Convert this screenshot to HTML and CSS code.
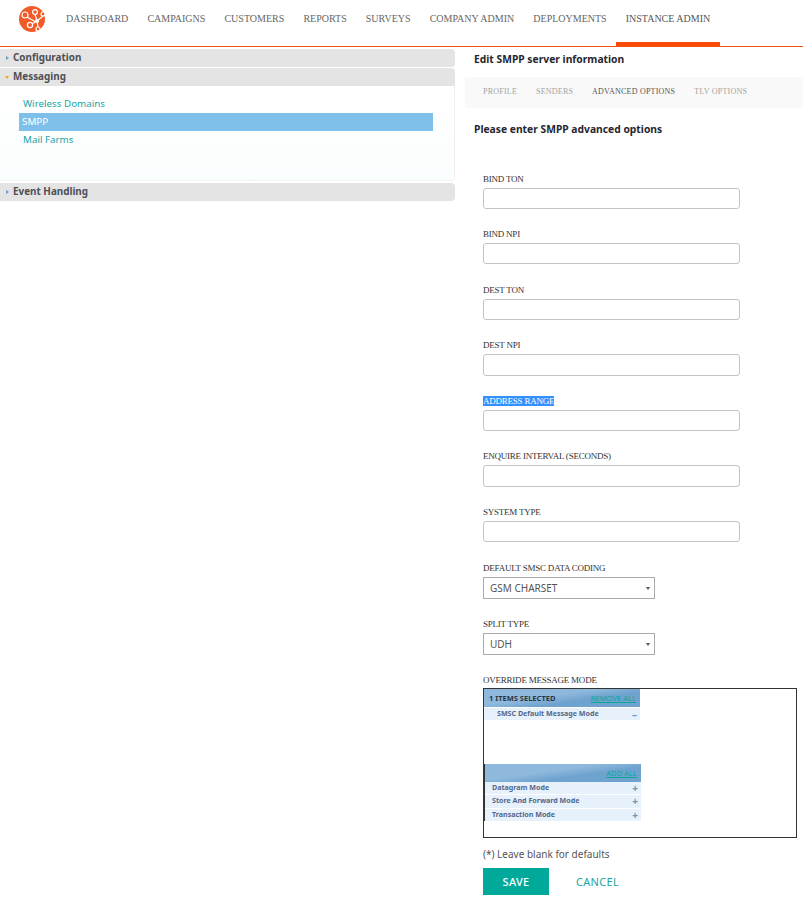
FILE: index.html
```html
<!DOCTYPE html>
<html lang="en">
<head>
<meta charset="utf-8">
<title>Edit SMPP server information</title>
<link rel="stylesheet" href="styles.css">
</head>
<body>
<header class="topbar">
  <svg class="logo" width="27" height="27" viewBox="0 0 27 27" aria-hidden="true">
    <circle cx="13" cy="13" r="13" fill="#f15a29"/>
    <g fill="none" stroke="#fff" stroke-width="1.2">
      <path d="M8 11 L16 15.5 M16 8 L18 15 M24 10 L18 15 M13 18 L18 15 M18 15 L19 21"/>
      <circle cx="6" cy="9" r="3" fill="#f15a29"/>
      <circle cx="16" cy="6" r="2.4" fill="#f15a29"/>
      <circle cx="24" cy="8" r="2" fill="#f15a29"/>
      <circle cx="11" cy="19" r="2.6" fill="#f15a29"/>
      <circle cx="19" cy="23" r="2" fill="#f15a29"/>
    </g>
    <circle cx="18" cy="15" r="2" fill="#fff"/>
  </svg>
  <nav class="nav">
    <a class="nav-item">DASHBOARD</a>
    <a class="nav-item">CAMPAIGNS</a>
    <a class="nav-item">CUSTOMERS</a>
    <a class="nav-item">REPORTS</a>
    <a class="nav-item">SURVEYS</a>
    <a class="nav-item">COMPANY ADMIN</a>
    <a class="nav-item">DEPLOYMENTS</a>
    <a class="nav-item active">INSTANCE ADMIN</a>
  </nav>
</header>
<div class="page">
  <aside class="sidebar">
    <div class="acc-head"><span class="tri right"></span>Configuration</div>
    <div class="acc-head"><span class="tri down"></span>Messaging</div>
    <div class="acc-body">
      <a class="acc-link">Wireless Domains</a>
      <a class="acc-link selected">SMPP</a>
      <a class="acc-link">Mail Farms</a>
    </div>
    <div class="acc-head"><span class="tri right"></span>Event Handling</div>
  </aside>
  <main class="content">
    <h1 class="title">Edit SMPP server information</h1>
    <div class="tabs">
      <span class="tab">PROFILE</span>
      <span class="tab">SENDERS</span>
      <span class="tab current">ADVANCED OPTIONS</span>
      <span class="tab">TLV OPTIONS</span>
    </div>
    <h2 class="subtitle">Please enter SMPP advanced options</h2>
    <form class="form">
      <div class="field"><label class="label">BIND TON</label><input class="input" type="text"></div>
      <div class="field"><label class="label">BIND NPI</label><input class="input" type="text"></div>
      <div class="field"><label class="label">DEST TON</label><input class="input" type="text"></div>
      <div class="field"><label class="label">DEST NPI</label><input class="input" type="text"></div>
      <div class="field"><label class="label"><span class="hl">ADDRESS RANGE</span></label><input class="input" type="text"></div>
      <div class="field"><label class="label">ENQUIRE INTERVAL (SECONDS)</label><input class="input" type="text"></div>
      <div class="field"><label class="label">SYSTEM TYPE</label><input class="input" type="text"></div>
      <div class="field sel-field"><label class="label">DEFAULT SMSC DATA CODING</label><div class="select">GSM CHARSET<span class="caret"></span></div></div>
      <div class="field sel-field"><label class="label">SPLIT TYPE</label><div class="select">UDH<span class="caret"></span></div></div>
      <div class="field multi-field">
        <label class="label">OVERRIDE MESSAGE MODE</label>
        <div class="multi">
          <div class="ms-head ms-selected"><b class="ms-count">1 ITEMS SELECTED</b><a class="ms-action">REMOVE ALL</a></div>
          <div class="ms-item ms-sel-item"><span>SMSC Default Message Mode</span><i class="ms-sign">–</i></div>
          <div class="ms-gap"></div>
          <div class="ms-avail">
            <div class="ms-head"><a class="ms-action">ADD ALL</a></div>
            <div class="ms-item"><span>Datagram Mode</span><i class="ms-sign">+</i></div>
            <div class="ms-item"><span>Store And Forward Mode</span><i class="ms-sign">+</i></div>
            <div class="ms-item"><span>Transaction Mode</span><i class="ms-sign">+</i></div>
          </div>
        </div>
      </div>
      <p class="hint">(*) Leave blank for defaults</p>
      <div class="actions">
        <button class="save" type="button">SAVE</button>
        <a class="cancel">CANCEL</a>
      </div>
    </form>
  </main>
</div>
</body>
</html>
```
FILE: styles.css
```css
* { box-sizing: border-box; }
html, body { margin: 0; padding: 0; background: #fff; }
body { width: 803px; height: 903px; overflow: hidden; font-family: "Noto Sans", sans-serif; color: #444; }

.topbar { height: 47px; display: flex; border-bottom: 1px solid #f04e12; position: relative; }
.logo { margin: 6px 0 0 19px; flex: none; }
.nav { display: flex; margin-left: 10.5px; }
.nav-item { font: 10px/37px "Liberation Serif", serif; color: #666; padding: 0 9.55px; white-space: nowrap; height: 46px; }
.nav-item.active { border-bottom: 4px solid #fa4b05; color: #555; }

.page { display: flex; }
.sidebar { width: 455px; padding-top: 2px; flex: none; }
.acc-head { height: 18px; margin-bottom: 1px; background: #e4e4e4; border-radius: 0 4px 4px 0; font: 700 9.9px/17px "Noto Sans", sans-serif; color: #4f4f55; padding-left: 13px; position: relative; }
.acc-head:nth-child(2) { margin-bottom: 0; border-radius: 0 4px 0 0; }
.tri { position: absolute; width: 0; height: 0; }
.tri.right { left: 6px; top: 7px; border-left: 3px solid #6a9fc9; border-top: 2.5px solid transparent; border-bottom: 2.5px solid transparent; }
.tri.down { left: 5px; top: 8px; border-top: 3px solid #f0a818; border-left: 2.5px solid transparent; border-right: 2.5px solid transparent; }
.acc-body { height: 95px; margin-bottom: 2px; padding: 9px 0 0 19px; border-right: 1px solid #f0f0f0; border-bottom: 1px solid #f0f0f0; border-radius: 0 0 4px 0; background: linear-gradient(#fff, #fbfefe); }
.acc-link { display: block; width: 414px; height: 18px; font: 9.8px/18px "Noto Sans", sans-serif; color: #1ba5a5; padding-left: 4px; }
.acc-link.selected { background: #7fc0ea; color: #fff; padding-left: 3px; }

.content { width: 338px; margin-left: 10px; flex: none; }
.title { margin: 4px 0 0 9px; font: 700 10.3px/16px "Noto Sans", sans-serif; color: #26262e; }
.tabs { height: 31px; margin-top: 10px; background: #f9f9f9; display: flex; padding-left: 18px; gap: 19px; }
.tab { font: 8px/29px "Liberation Serif", serif; color: #a2a2a2; letter-spacing: 0.22px; }
.tab.current { color: #555; }
.subtitle { margin: 13px 0 0 9px; font: 700 10.3px/16px "Noto Sans", sans-serif; color: #26262e; }

.form { padding: 0 0 0 18px; margin-top: 35.5px; }
.field { height: 55.6px; }
.label { display: block; font: 9px/13px "Liberation Serif", serif; color: #333; height: 15px; letter-spacing: -0.23px; }
.hl { background: #3390ff; color: #fff; }
.input { display: block; width: 257px; height: 21.4px; border: 1px solid #c4c4c4; border-radius: 3px; background: #fff; }
.sel-field { height: 56px; }
.select { width: 172px; height: 22px; border: 1px solid #aaa; font: 10px/20px "Noto Sans", sans-serif; color: #555; padding-left: 6px; position: relative; }
.caret { position: absolute; right: 4px; top: 9px; border-top: 3px solid #555; border-left: 2px solid transparent; border-right: 2px solid transparent; }

.multi-field { height: auto; }
.label + .multi { margin-top: -1px; }
.multi { width: 314px; height: 150px; border: 1px solid #333; background: #fff; }
.ms-head { width: 156px; height: 18px; display: flex; align-items: center; justify-content: flex-end; padding-right: 4px; background: linear-gradient(172deg, #8fb9dc 0, #8fb9dc 40%, #6fa3cf 62%, #6fa3cf 100%); }
.ms-selected { justify-content: space-between; padding-left: 5px; }
.ms-count { font: 700 7.5px/18px "Noto Sans", sans-serif; color: #2c3440; }
.ms-action { font: 7.6px/18px "Noto Sans", sans-serif; color: #10a595; text-decoration: underline; }
.ms-item { width: 156px; height: 12px; margin-bottom: 1px; background: #e6f1fb; display: flex; justify-content: space-between; padding: 0 3px 0 7px; font: 700 7.1px/10px "Noto Sans", sans-serif; color: #53678a; }
.ms-sel-item { padding-left: 13px; margin-top: 1px; }
.ms-sign { font: 700 10px/13px "Noto Sans", sans-serif; color: #6c94bb; }
.ms-gap { height: 43px; }
.ms-avail { border-left: 1px solid #333; }
.ms-avail .ms-item { height: 12.5px; }

.hint { margin: 9px 0 0 0; font: 10px/14px "Noto Sans", sans-serif; color: #555; }
.actions { display: flex; align-items: center; margin-top: 7px; }
.save { width: 66px; height: 27px; background: #00a99a; border: 0; color: #fff; font: 500 11px/27px "Noto Sans", sans-serif; letter-spacing: 0.3px; padding: 0; }
.cancel { margin-left: 27px; font: 11px/27px "Noto Sans", sans-serif; color: #1ba5a5; letter-spacing: 0.3px; }
```
